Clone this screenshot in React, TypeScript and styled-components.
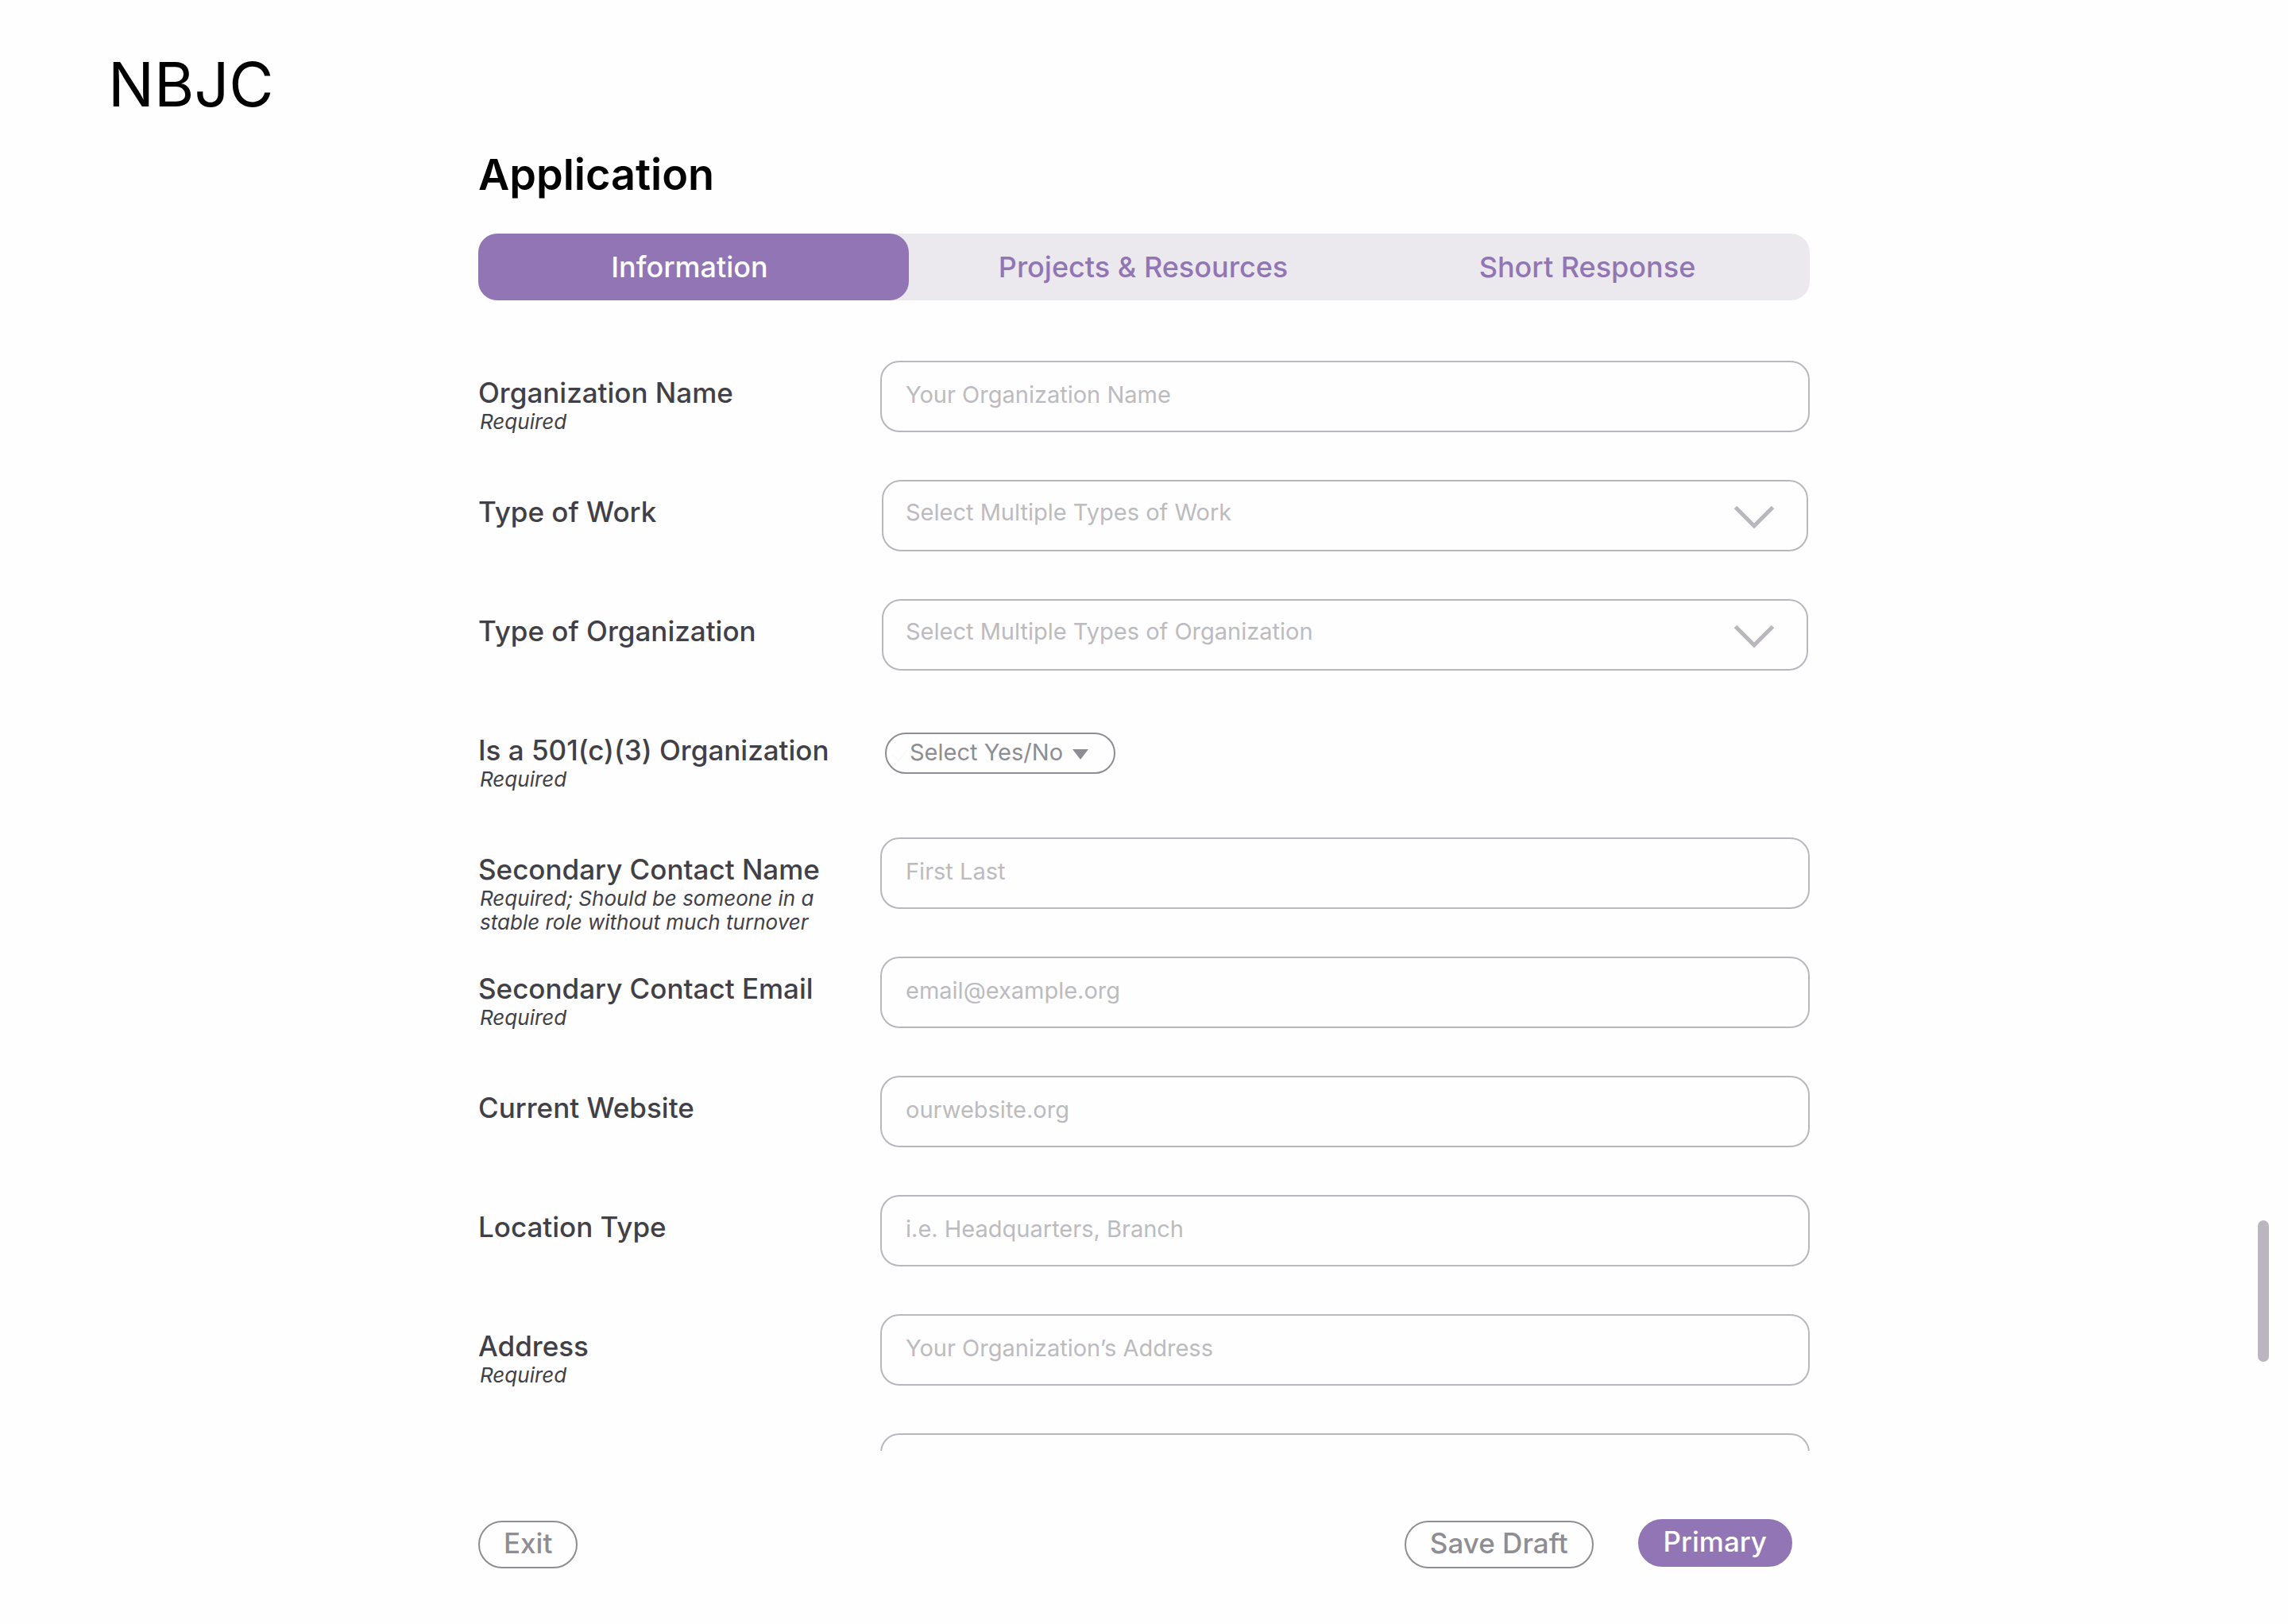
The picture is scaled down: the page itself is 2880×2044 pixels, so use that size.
import React from "react";
import styled, { createGlobalStyle, css } from "styled-components";

const color = {
  ink: "#000000",
  label: "#424047",
  purple: "#9275b4",
  track: "#ece9ee",
  line: "#b9b7bd",
  placeholder: "#bcbbbf",
  button: "#8e8d93",
  ghost: "#fafafa",
};

const GlobalStyle = createGlobalStyle`
  *, *::before, *::after { box-sizing: border-box; }
  body {
    margin: 0;
    background: #fefefe;
    font-family: Inter, "Liberation Sans", sans-serif;
  }
  button, input, select { font-family: inherit; }
`;

const Page = styled.div`
  display: flex;
  flex-direction: column;
  height: 100vh;
`;

const Header = styled.header`
  padding: 58px 136px 0;
`;

const Brand = styled.a`
  display: inline-block;
  color: ${color.ink};
  font-size: 77px;
  line-height: 96px;
  text-decoration: none;
`;

const Main = styled.main`
  display: flex;
  flex: 1;
  flex-direction: column;
  width: 100%;
  min-height: 0;
  max-width: 1676px;
  margin: 0 auto;
`;

const Title = styled.h1`
  margin: 34px 0 42px;
  color: ${color.ink};
  font-size: 54px;
  font-weight: 600;
  line-height: 64px;
`;

const Tabs = styled.nav`
  display: grid;
  flex: none;
  grid-template-columns: 542fr 590fr 528fr;
  height: 84px;
  padding-right: 16px;
  border-radius: 24px;
  background: ${color.track};
`;

const Tab = styled.button<{ $active?: boolean }>`
  padding: 0;
  border: 0;
  border-radius: 24px;
  background: transparent;
  color: ${color.purple};
  font-size: 36px;
  font-weight: 500;
  line-height: 40px;
  ${(p) =>
    p.$active &&
    css`
      padding-right: 10px;
      background: ${color.purple};
      color: #ffffff;
    `}
`;

const Form = styled.form`
  flex: 1;
  min-height: 0;
  margin-top: 76px;
  overflow-y: auto;
  scrollbar-width: none;
`;

const Row = styled.div`
  display: grid;
  grid-template-columns: 506px 1fr;
  align-items: start;
  min-height: 150px;
`;

const LabelCell = styled.div`
  padding-top: 20px;
  color: ${color.label};
`;

const Label = styled.label`
  display: block;
  font-size: 35px;
  font-weight: 500;
  line-height: 40px;
`;

const Hint = styled.p`
  max-width: 450px;
  margin: 2px 0 0 2px;
  font-size: 26px;
  font-style: italic;
  line-height: 30px;
`;

const fieldBox = css`
  width: 100%;
  height: 90px;
  border: 2px solid ${color.line};
  border-radius: 24px;
  background: transparent;
  font-size: 29px;
`;

const TextField = styled.input`
  ${fieldBox}
  padding: 0 30px 6px;
  color: ${color.label};
  &::placeholder {
    color: ${color.placeholder};
    opacity: 1;
  }
`;

const SelectWrap = styled.div`
  position: relative;
  padding: 0 2px;
`;

const SelectField = styled.select`
  ${fieldBox}
  padding: 0 100px 10px 28px;
  color: ${color.placeholder};
  appearance: none;
`;

const Chevron = styled.svg`
  position: absolute;
  top: 32px;
  right: 44px;
  width: 52px;
  height: 30px;
  fill: none;
  stroke: ${color.line};
  stroke-width: 5;
  pointer-events: none;
`;

const PillWrap = styled.div`
  position: relative;
  width: 290px;
  margin: 18px 0 0 6px;
`;

const PillSelect = styled.select`
  width: 100%;
  height: 52px;
  padding: 0 56px 4px 29px;
  border: 2px solid ${color.button};
  border-radius: 26px;
  background: transparent;
  color: ${color.button};
  font-size: 29px;
  appearance: none;
`;

const Caret = styled.svg`
  position: absolute;
  top: 21px;
  right: 34px;
  width: 20px;
  height: 13px;
  fill: ${color.button};
  pointer-events: none;
`;

const Tick = styled.svg`
  position: absolute;
  top: 20px;
  left: 9px;
  width: 20px;
  height: 18px;
  fill: none;
  stroke: ${color.ghost};
  stroke-width: 2;
  pointer-events: none;
`;

const Footer = styled.footer`
  display: flex;
  flex: none;
  align-items: flex-end;
  justify-content: space-between;
  padding: 86px 22px 70px 0;
`;

const Actions = styled.div`
  display: flex;
  align-items: flex-end;
  gap: 56px;
`;

const Button = styled.button<{ $primary?: boolean }>`
  height: 60px;
  padding: 0 30px 4px;
  border: 2px solid ${color.button};
  border-radius: 30px;
  background: transparent;
  color: ${color.button};
  font-size: 35px;
  font-weight: 500;
  line-height: 40px;
  ${(p) =>
    p.$primary &&
    css`
      margin-bottom: 2px;
      border-color: ${color.purple};
      background: ${color.purple};
      color: #ffffff;
    `}
`;

const ScrollThumb = styled.div`
  position: fixed;
  top: 1536px;
  right: 24px;
  width: 14px;
  height: 178px;
  border-radius: 7px;
  background: ${color.line};
`;

type Field = {
  id: string;
  label?: string;
  hint?: string;
  kind?: "text" | "select" | "pill";
  placeholder: string;
};

const fields: Field[] = [
  { id: "org-name", label: "Organization Name", hint: "Required", placeholder: "Your Organization Name" },
  { id: "work-type", label: "Type of Work", kind: "select", placeholder: "Select Multiple Types of Work" },
  { id: "org-type", label: "Type of Organization", kind: "select", placeholder: "Select Multiple Types of Organization" },
  { id: "is-501c3", label: "Is a 501(c)(3) Organization", hint: "Required", kind: "pill", placeholder: "Select Yes/No" },
  {
    id: "contact-name",
    label: "Secondary Contact Name",
    hint: "Required; Should be someone in a stable role without much turnover",
    placeholder: "First Last",
  },
  { id: "contact-email", label: "Secondary Contact Email", hint: "Required", placeholder: "email@example.org" },
  { id: "website", label: "Current Website", placeholder: "ourwebsite.org" },
  { id: "location-type", label: "Location Type", placeholder: "i.e. Headquarters, Branch" },
  { id: "address", label: "Address", hint: "Required", placeholder: "Your Organization’s Address" },
  { id: "address-2", placeholder: "" },
];

function Control({ id, label, kind, placeholder }: Field) {
  if (kind === "select") {
    return (
      <SelectWrap>
        <SelectField id={id}>
          <option>{placeholder}</option>
        </SelectField>
        <Chevron viewBox="0 0 52 30" aria-hidden="true">
          <path d="M2.5 2.5 26 26 49.5 2.5" />
        </Chevron>
      </SelectWrap>
    );
  }
  if (kind === "pill") {
    return (
      <PillWrap>
        <Tick viewBox="0 0 20 18" aria-hidden="true">
          <path d="M1 8 8 16 19 1" />
        </Tick>
        <PillSelect id={id}>
          <option>{placeholder}</option>
        </PillSelect>
        <Caret viewBox="0 0 20 13" aria-hidden="true">
          <path d="M0 0h20L10 13z" />
        </Caret>
      </PillWrap>
    );
  }
  return (
    <TextField
      id={id}
      type="text"
      placeholder={placeholder}
      aria-label={label ? undefined : "Address line 2"}
    />
  );
}

export default function App() {
  return (
    <>
      <GlobalStyle />
      <Page>
        <Header>
          <Brand href="#">NBJC</Brand>
        </Header>
        <Main>
          <Title>Application</Title>
          <Tabs>
            <Tab type="button" $active>Information</Tab>
            <Tab type="button">Projects &amp; Resources</Tab>
            <Tab type="button">Short Response</Tab>
          </Tabs>
          <Form id="application">
            {fields.map((field) => (
              <Row key={field.id}>
                <LabelCell>
                  {field.label && <Label htmlFor={field.id}>{field.label}</Label>}
                  {field.hint && <Hint>{field.hint}</Hint>}
                </LabelCell>
                <Control {...field} />
              </Row>
            ))}
          </Form>
          <Footer>
            <Button type="button">Exit</Button>
            <Actions>
              <Button type="button">Save Draft</Button>
              <Button type="submit" form="application" $primary>Primary</Button>
            </Actions>
          </Footer>
        </Main>
      </Page>
      <ScrollThumb />
    </>
  );
}
